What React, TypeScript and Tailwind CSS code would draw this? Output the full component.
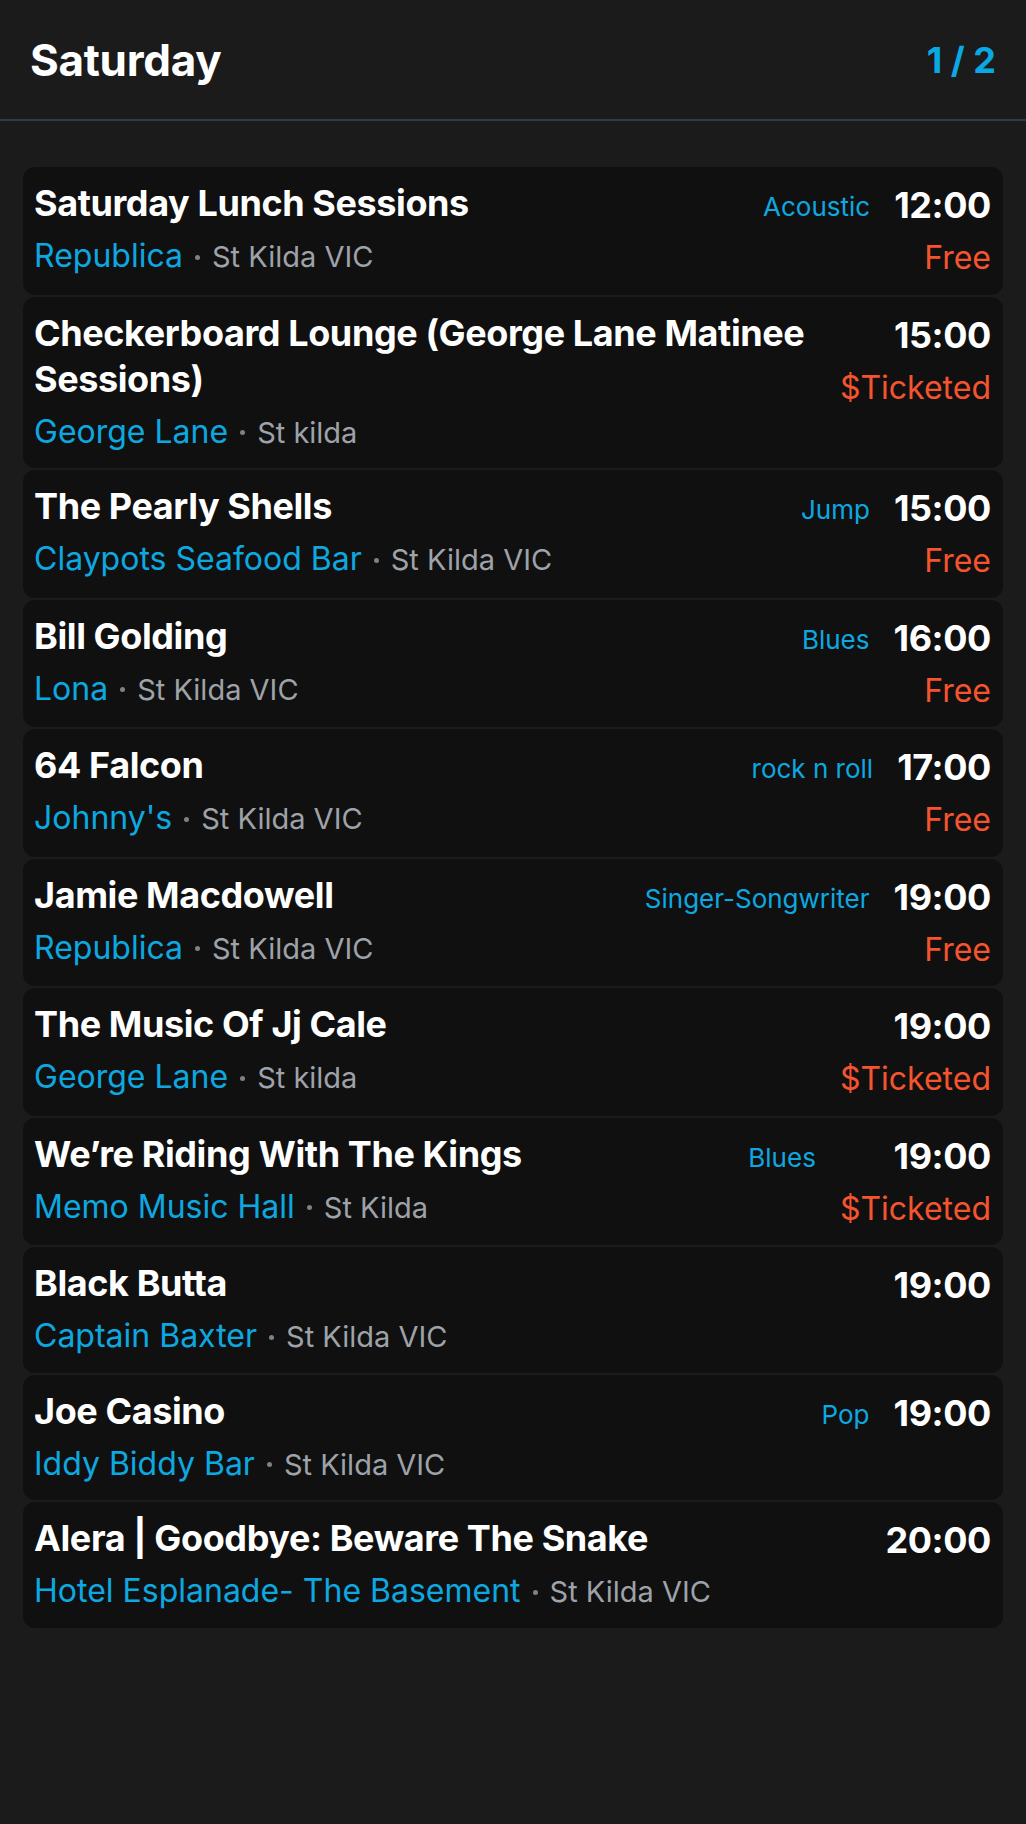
import React from "react";

type Ev = {
  title: string;
  genre?: string;
  time: string;
  venue: string;
  place: string;
  price?: string;
};

const events: Ev[] = [
  { title: "Saturday Lunch Sessions", genre: "Acoustic", time: "12:00", venue: "Republica", place: "St Kilda VIC", price: "Free" },
  { title: "Checkerboard Lounge (George Lane Matinee Sessions)", time: "15:00", venue: "George Lane", place: "St kilda", price: "$Ticketed" },
  { title: "The Pearly Shells", genre: "Jump", time: "15:00", venue: "Claypots Seafood Bar", place: "St Kilda VIC", price: "Free" },
  { title: "Bill Golding", genre: "Blues", time: "16:00", venue: "Lona", place: "St Kilda VIC", price: "Free" },
  { title: "64 Falcon", genre: "rock n roll", time: "17:00", venue: "Johnny's", place: "St Kilda VIC", price: "Free" },
  { title: "Jamie Macdowell", genre: "Singer-Songwriter", time: "19:00", venue: "Republica", place: "St Kilda VIC", price: "Free" },
  { title: "The Music Of Jj Cale", time: "19:00", venue: "George Lane", place: "St kilda", price: "$Ticketed" },
  { title: "We\u2019re Riding With The Kings", genre: "Blues", time: "19:00", venue: "Memo Music Hall", place: "St Kilda", price: "$Ticketed" },
  { title: "Black Butta", time: "19:00", venue: "Captain Baxter", place: "St Kilda VIC" },
  { title: "Joe Casino", genre: "Pop", time: "19:00", venue: "Iddy Biddy Bar", place: "St Kilda VIC" },
  { title: "Alera | Goodbye: Beware The Snake", time: "20:00", venue: "Hotel Esplanade- The Basement", place: "St Kilda VIC" },
];

function Card({ ev }: { ev: Ev }) {
  return (
    <div className="flex rounded-[12px] bg-[#101010] pl-[11px] pr-[12px] pt-[13px] pb-[12.5px]">
      <div className="flex min-w-0 flex-1 flex-col">
        <div className="flex items-baseline justify-between gap-[24px]">
          <div className="text-[36px] font-bold leading-[46px] text-white tracking-[-0.4px]">{ev.title}</div>
          {ev.genre && (
            <div className="shrink-0 whitespace-nowrap text-[26px] leading-[34px] text-[#0ea8e0]">{ev.genre}</div>
          )}
        </div>
        <div className="mt-[6px] flex h-[48px] items-center">
          <span className="text-[32px] leading-[48px] text-[#0ea8e0]">{ev.venue}</span>
          <span className="mx-[12px] mt-[2px] inline-block h-[5px] w-[5px] shrink-0 rounded-full bg-[#7d828a]" />
          <span className="mt-[2px] text-[29px] leading-[48px] text-[#9ea2a9]">{ev.place}</span>
        </div>
      </div>
      <div className="ml-[24px] flex shrink-0 flex-col items-end">
        <div className="mt-[2px] text-[36px] font-bold leading-[46px] text-white tracking-[-0.4px]">{ev.time}</div>
        {ev.price && (
          <div className="mt-[6px] text-[32px] leading-[48px] text-[#f5542e]">{ev.price}</div>
        )}
      </div>
    </div>
  );
}

export default function App() {
  return (
    <div
      className="min-h-[1824px] w-full bg-[#1b1b1b]"
      style={{ fontFamily: "Inter, 'Noto Sans', sans-serif" }}
    >
      <div className="flex h-[121px] items-center justify-between border-b-2 border-[#323a46] px-[30px]">
        <div className="text-[44px] font-bold leading-[52px] text-white tracking-[-0.3px]">Saturday</div>
        <div className="text-[36px] font-bold leading-[44px] text-[#0aa9e3]">1 / 2</div>
      </div>
      <div className="flex flex-col gap-[2px] px-[23px] pt-[46px]">
        {events.map((ev, i) => (
          <Card key={i} ev={ev} />
        ))}
      </div>
    </div>
  );
}
